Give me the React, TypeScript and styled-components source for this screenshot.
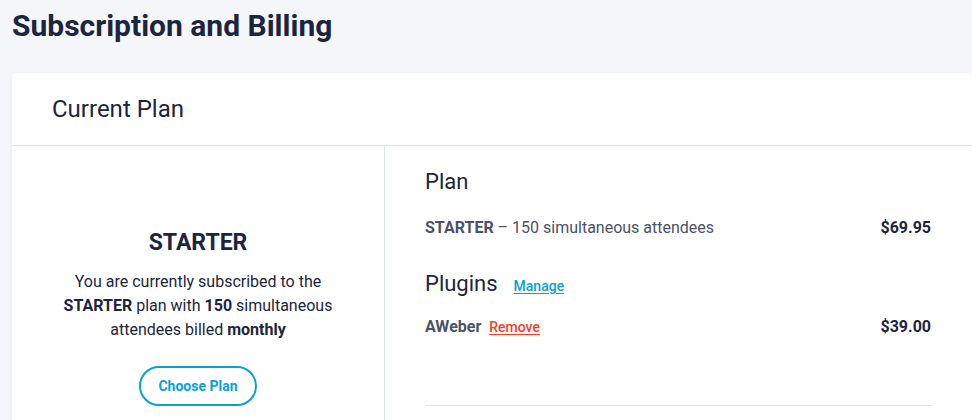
import React from "react";
import styled, { createGlobalStyle } from "styled-components";

const GlobalStyle = createGlobalStyle`
  html, body {
    margin: 0;
    padding: 0;
    background: #f5f6fa;
    font-family: Roboto, "Liberation Sans", Arial, sans-serif;
    color: #1c2540;
    overflow: hidden;
  }
`;

const Page = styled.div`
  padding: 8px 0 0 12px;
  width: 960px;
`;

const Title = styled.h1`
  margin: 0;
  font-size: 30px;
  line-height: 36px;
  font-weight: 700;
  color: #1c2540;
`;

const Card = styled.section`
  margin-top: 29px;
  background: #ffffff;
  border-radius: 4px;
  box-shadow: 0 1px 3px rgba(28, 37, 64, 0.06);
`;

const CardHeader = styled.header`
  height: 72px;
  display: flex;
  align-items: center;
  padding: 0 40px;
  border-bottom: 1px solid #dbe6ed;
  font-size: 24px;
  font-weight: 400;
`;

const Columns = styled.div`
  display: grid;
  grid-template-columns: 373px 1fr;
  min-height: 300px;
`;

const Summary = styled.div`
  display: flex;
  flex-direction: column;
  align-items: center;
  text-align: center;
  padding-top: 83px;
  border-right: 1px solid #dbe6ed;
`;

const PlanName = styled.h2`
  margin: 0;
  font-size: 23px;
  line-height: 28px;
  font-weight: 700;
`;

const Blurb = styled.p`
  margin: 13px 0 0;
  max-width: 300px;
  font-size: 16px;
  line-height: 24px;

  b {
    font-weight: 700;
  }
`;

const OutlineButton = styled.button`
  margin-top: 24px;
  height: 40px;
  padding: 0 17px;
  border: 2px solid #0a9fd8;
  border-radius: 20px;
  background: #ffffff;
  color: #0a9fd8;
  font-family: inherit;
  font-size: 14px;
  font-weight: 700;
  cursor: pointer;
`;

const Details = styled.div`
  padding: 22px 41px 0 40px;
`;

const SectionTitle = styled.h3<{ $gap?: number }>`
  margin: ${(p) => p.$gap ?? 0}px 0 0;
  height: 28px;
  display: flex;
  align-items: baseline;
  gap: 16px;
  font-size: 22px;
  line-height: 28px;
  font-weight: 400;
`;

const LineItem = styled.div<{ $gap: number }>`
  margin-top: ${(p) => p.$gap}px;
  height: 24px;
  display: flex;
  justify-content: space-between;
  align-items: baseline;
  font-size: 16px;
  line-height: 24px;
  color: #4a5169;

  b {
    font-weight: 700;
  }
`;

const Price = styled.span`
  font-weight: 700;
  color: #1c2540;
`;

const TextLink = styled.a<{ $tone: "blue" | "red" }>`
  font-size: 14px;
  line-height: 1;
  font-weight: 500;
  text-decoration: underline;
  text-underline-offset: 2px;
  color: ${(p) => (p.$tone === "blue" ? "#0a9fd8" : "#ff3b1f")};
  cursor: pointer;
`;

const Divider = styled.hr`
  margin: 66px 0 0;
  border: 0;
  border-top: 1px solid #d3e4ee;
`;

export default function App() {
  return (
    <>
      <GlobalStyle />
      <Page>
        <Title>Subscription and Billing</Title>
        <Card>
          <CardHeader>Current Plan</CardHeader>
          <Columns>
            <Summary>
              <PlanName>STARTER</PlanName>
              <Blurb>
                You are currently subscribed to the <b>STARTER</b> plan with{" "}
                <b>150</b> simultaneous attendees billed <b>monthly</b>
              </Blurb>
              <OutlineButton>Choose Plan</OutlineButton>
            </Summary>
            <Details>
              <SectionTitle>Plan</SectionTitle>
              <LineItem $gap={20}>
                <span>
                  <b>STARTER</b> – 150 simultaneous attendees
                </span>
                <Price>$69.95</Price>
              </LineItem>
              <SectionTitle $gap={30}>
                <span>Plugins</span>
                <TextLink $tone="blue">Manage</TextLink>
              </SectionTitle>
              <LineItem $gap={17}>
                <span>
                  <b>AWeber</b>{" "}
                  <TextLink $tone="red" style={{ marginLeft: 4 }}>
                    Remove
                  </TextLink>
                </span>
                <Price>$39.00</Price>
              </LineItem>
              <Divider />
            </Details>
          </Columns>
        </Card>
      </Page>
    </>
  );
}
